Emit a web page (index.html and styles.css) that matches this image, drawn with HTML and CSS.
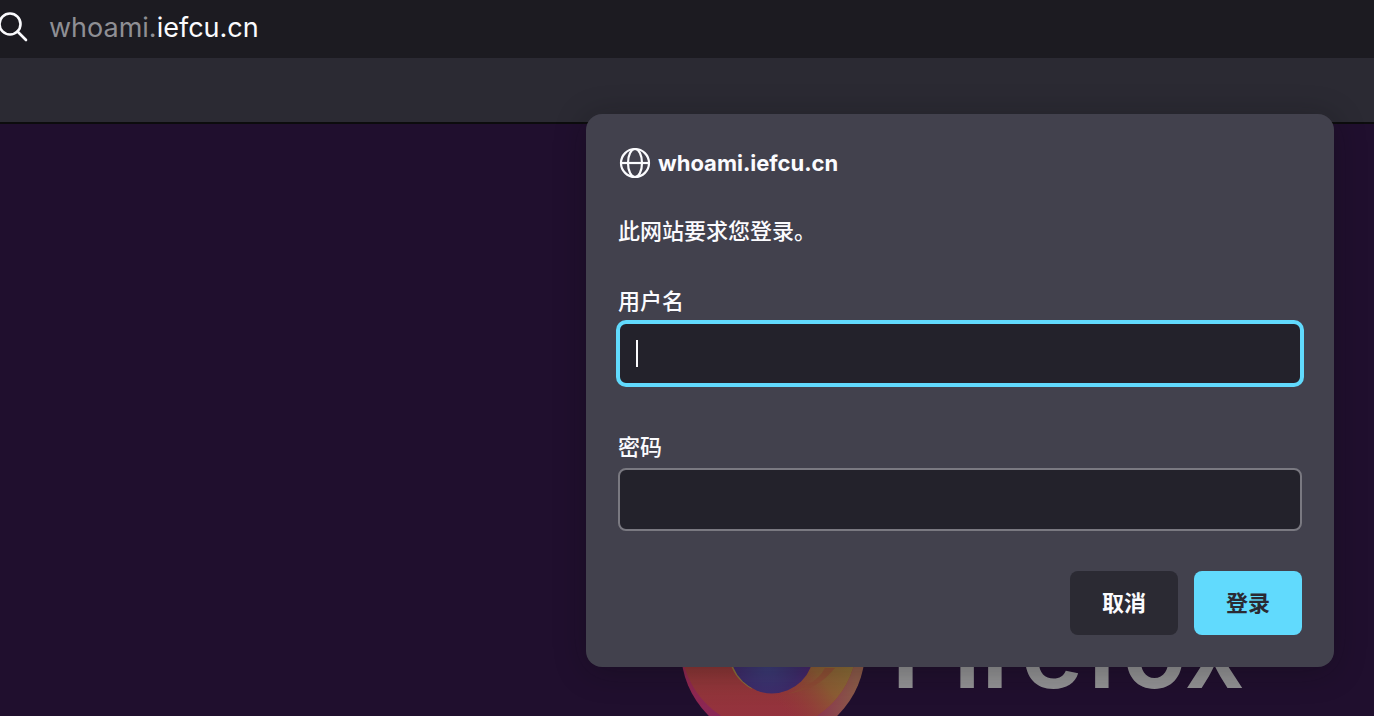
FILE: index.html
```html
<!DOCTYPE html>
<html lang="zh-CN">
<head>
<meta charset="utf-8">
<title>whoami.iefcu.cn</title>
<link rel="stylesheet" href="styles.css">
</head>
<body>
<div class="browser">
  <header class="urlbar">
    <svg class="search-icon" viewBox="0 0 28 32" aria-hidden="true"><circle cx="10" cy="12" r="10.5"/><path d="M17.5 19.5 26 28"/></svg>
    <div class="address"><span class="subdomain">whoami.</span>iefcu.cn</div>
  </header>
  <div class="toolbar"></div>
  <main class="page">
    <div class="brand">
      <svg class="brand-logo" viewBox="0 0 190 190" aria-hidden="true">
        <defs>
          <linearGradient id="body" x1="0" y1="0" x2="0" y2="1">
            <stop offset="0.5" stop-color="#84352f"/><stop offset="0.75" stop-color="#92363a"/><stop offset="1" stop-color="#96303f"/>
          </linearGradient>
          <linearGradient id="edge" x1="0" y1="0" x2="1" y2="0">
            <stop offset="0" stop-color="#92284f"/><stop offset="0.35" stop-color="#82265a"/><stop offset="0.7" stop-color="#8a2f50"/><stop offset="0.95" stop-color="#8b5a48"/>
          </linearGradient>
          <linearGradient id="flame" gradientUnits="userSpaceOnUse" x1="172" y1="108" x2="108" y2="158">
            <stop offset="0" stop-color="#8a6d36"/><stop offset="0.4" stop-color="#8c5c34"/><stop offset="1" stop-color="#903b37" stop-opacity="0"/>
          </linearGradient>
          <radialGradient id="globe" cx="0.45" cy="0.65" r="0.6">
            <stop offset="0" stop-color="#3a3d78"/><stop offset="0.6" stop-color="#3d2c6b"/><stop offset="1" stop-color="#4b2068"/>
          </radialGradient>
          <clipPath id="disc"><circle cx="95" cy="95" r="92"/></clipPath>
        </defs>
        <circle cx="95" cy="95" r="92" fill="url(#edge)"/>
        <g clip-path="url(#disc)">
          <circle cx="91" cy="87" r="88" fill="url(#body)"/>
          <circle cx="91" cy="87" r="88" fill="url(#flame)"/>
          <path d="M157 113c-13 16-28 23-48 26 18-6 32-14 38-26Z" fill="#8f4935" fill-opacity="0.7"/>
        </g>
        <path d="M52 108c4 12 11 20 22 26l-10-26Z" fill="#8c7037"/>
        <circle cx="94" cy="97" r="41.5" fill="url(#globe)"/>
      </svg>
      <span class="brand-name">Firefox</span>
    </div>
  </main>
  <form class="dialog" role="dialog" aria-labelledby="site">
    <div class="site">
      <svg class="globe-icon" viewBox="0 0 34 34" aria-hidden="true"><circle cx="17" cy="17" r="14"/><ellipse cx="17" cy="17" rx="7" ry="14"/><path d="M3 17h28"/></svg>
      <strong id="site">whoami.iefcu.cn</strong>
    </div>
    <p class="message">此网站要求您登录。</p>
    <div class="field">
      <label for="username">用户名</label>
      <div class="control active"><input id="username" type="text"></div>
    </div>
    <div class="field">
      <label for="password">密码</label>
      <div class="control"><input id="password" type="password"></div>
    </div>
    <div class="actions">
      <button type="button" class="button">取消</button>
      <button type="submit" class="button primary">登录</button>
    </div>
  </form>
</div>
</body>
</html>
```
FILE: styles.css
```css
* {
  box-sizing: border-box;
}

body {
  margin: 0;
  font-family: Inter, "Noto Sans CJK SC", sans-serif;
  color: #fbfbfe;
}

.browser {
  position: relative;
  display: flex;
  flex-direction: column;
  height: 100vh;
  overflow: hidden;
}

.urlbar {
  display: flex;
  flex: none;
  align-items: center;
  gap: 21px;
  height: 58px;
  padding-bottom: 2px;
  background: #1c1b21;
}

.search-icon {
  width: 28px;
  height: 32px;
  fill: none;
  stroke: #fbfbfe;
  stroke-width: 2.6;
  stroke-linecap: round;
}

.address {
  font-size: 27px;
  line-height: 36px;
}

.subdomain {
  color: #8f8f94;
}

.toolbar {
  flex: none;
  height: 66px;
  background: #2b2a33;
  border-bottom: 2px solid #0c0c0d;
}

.page {
  flex: 1;
  min-height: 0;
  padding: 431px 0 0 678px;
  overflow: hidden;
  background: #200f2e;
}

.brand {
  display: flex;
  align-items: center;
  gap: 23px;
}

.brand-logo {
  flex: none;
  width: 190px;
  height: 190px;
}

.brand-name {
  font-size: 106px;
  font-weight: 600;
  line-height: 120px;
  color: #929294;
}

.dialog {
  position: absolute;
  top: 114px;
  right: 40px;
  width: 748px;
  max-width: calc(100% - 80px);
  padding: 32px;
  border-radius: 16px;
  background: #42414d;
  box-shadow: 0 4px 32px rgba(12, 12, 13, 0.3);
  font-size: 22px;
  line-height: 32px;
}

.site {
  display: flex;
  align-items: center;
  gap: 6px;
}

.site strong {
  font-weight: 700;
}

.globe-icon {
  width: 34px;
  height: 34px;
  fill: none;
  stroke: #fbfbfe;
  stroke-width: 2.2;
}

.message {
  margin: 35px 0 38px;
  font-weight: 500;
}

.field label {
  display: block;
  margin-bottom: 5px;
  font-weight: 500;
}

.field + .field {
  margin-top: 46px;
}

.control {
  position: relative;
}

.control input {
  display: block;
  width: 100%;
  height: 63px;
  padding: 0 16px;
  border: 2px solid #7a7981;
  border-radius: 8px;
  outline: none;
  background: #23222b;
  color: #fbfbfe;
  font: inherit;
}

.active input {
  border-color: #61dafd;
  box-shadow: 0 0 0 2px #61dafd;
}

.active::after {
  content: "";
  position: absolute;
  top: 18px;
  left: 18px;
  width: 2px;
  height: 27px;
  background: #fbfbfe;
}

.actions {
  display: flex;
  justify-content: flex-end;
  gap: 16px;
  margin-top: 40px;
}

.button {
  width: 108px;
  height: 64px;
  border: 0;
  border-radius: 8px;
  background: #2b2a33;
  color: #fbfbfe;
  font: inherit;
  font-weight: 700;
}

.primary {
  background: #61dafd;
  color: #2b2a33;
}
```
